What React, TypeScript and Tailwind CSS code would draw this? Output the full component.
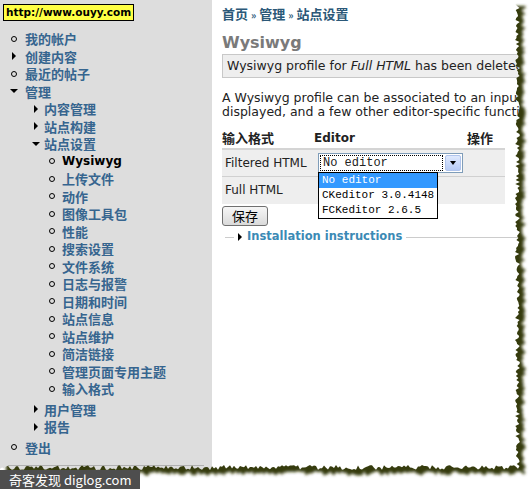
import React from 'react'

type Marker = 'circle' | 'right' | 'down'

interface MenuItem {
  label: string
  level: 0 | 1 | 2
  marker: Marker
  active?: boolean
  gap?: boolean
}

const menu: MenuItem[] = [
  { label: '我的帐户', level: 0, marker: 'circle' },
  { label: '创建内容', level: 0, marker: 'right' },
  { label: '最近的帖子', level: 0, marker: 'circle' },
  { label: '管理', level: 0, marker: 'down' },
  { label: '内容管理', level: 1, marker: 'right' },
  { label: '站点构建', level: 1, marker: 'right' },
  { label: '站点设置', level: 1, marker: 'down' },
  { label: 'Wysiwyg', level: 2, marker: 'circle', active: true },
  { label: '上传文件', level: 2, marker: 'circle' },
  { label: '动作', level: 2, marker: 'circle' },
  { label: '图像工具包', level: 2, marker: 'circle' },
  { label: '性能', level: 2, marker: 'circle' },
  { label: '搜索设置', level: 2, marker: 'circle' },
  { label: '文件系统', level: 2, marker: 'circle' },
  { label: '日志与报警', level: 2, marker: 'circle' },
  { label: '日期和时间', level: 2, marker: 'circle' },
  { label: '站点信息', level: 2, marker: 'circle' },
  { label: '站点维护', level: 2, marker: 'circle' },
  { label: '简洁链接', level: 2, marker: 'circle' },
  { label: '管理页面专用主题', level: 2, marker: 'circle' },
  { label: '输入格式', level: 2, marker: 'circle' },
  { label: '用户管理', level: 1, marker: 'right', gap: true },
  { label: '报告', level: 1, marker: 'right' },
  { label: '登出', level: 0, marker: 'circle', gap: true },
]

const cjk = "font-['Noto_Sans_CJK_SC',sans-serif]"
const latin = "font-['DejaVu_Sans','Noto_Sans_CJK_SC',sans-serif]"

const MarkerIcon = ({ type }: { type: Marker }) => {
  if (type === 'circle')
    return <span className="block h-[6px] w-[6px] rounded-full border border-black" />
  if (type === 'right')
    return <span className="block h-0 w-0 border-y-[4px] border-l-[4px] border-y-transparent border-l-black" />
  return <span className="block h-0 w-0 border-x-[4px] border-t-[4px] border-x-transparent border-t-black" />
}

// jagged torn paper edge, drawn once
function tornEdge() {
  let s = 17
  const r = () => {
    s = (s * 9301 + 49297) % 233280
    return s / 233280
  }
  const pts: string[] = []
  for (let y = 0; y <= 466; y += 2) pts.push(`${(515 + r() * 5).toFixed(1)},${y}`)
  for (let x = 518; x >= 0; x -= 2) pts.push(`${x},${(465 + r() * 5).toFixed(1)}`)
  return `M0,0 L${pts.join(' L')} Z`
}
const paper = tornEdge()

const TornOverlay = () => (
  <svg className="pointer-events-none absolute inset-0" width="532" height="489">
    <defs>
      <clipPath id="outside">
        <path clipRule="evenodd" d={`M0,0 H532 V489 H0 Z ${paper}`} />
      </clipPath>
      <filter id="soft" x="-5%" y="-5%" width="110%" height="110%">
        <feGaussianBlur stdDeviation="1.5" />
      </filter>
    </defs>
    <path fillRule="evenodd" fill="#ffffff" d={`M0,0 H532 V489 H0 Z ${paper}`} />
    <g clipPath="url(#outside)">
      <path d={paper} transform="translate(6,6)" fill="#363a0c" filter="url(#soft)" />
    </g>
  </svg>
)

export default function App() {
  return (
    <div className="relative h-[489px] w-[532px] overflow-hidden bg-white">
      <div className="flex h-full">
        {/* sidebar */}
        <div className="flex w-[212px] shrink-0 flex-col bg-[#dddddd]">
          <div className="ml-[3px] mt-[4px] w-fit border border-black bg-[#ffff44] px-[2px] text-[10.5px] font-bold leading-[15px] text-black font-['DejaVu_Sans',sans-serif]">
            http://www.ouyy.com
          </div>
          <ul className="mt-[9px]">
            {menu.map((m) => (
              <li
                key={m.label}
                className={`flex h-[17.5px] items-center ${
                  m.level === 0 ? 'pl-[10px]' : m.level === 1 ? 'pl-[32px]' : 'pl-[48px]'
                } ${m.gap ? 'mt-[3px]' : ''}`}
              >
                <span
                  className={`flex w-[8px] justify-center ${
                    m.level === 0 ? 'mr-[7px]' : m.level === 1 ? 'mr-[4px]' : 'mr-[6px]'
                  }`}
                >
                  <MarkerIcon type={m.marker} />
                </span>
                <span
                  className={
                    m.active
                      ? `text-[12px] font-bold text-black ${latin}`
                      : `text-[13px] font-bold text-[#36658f] ${cjk}`
                  }
                >
                  {m.label}
                </span>
              </li>
            ))}
          </ul>
          <div className="mx-[8px] mb-[23px] mt-auto h-px bg-[#b0b0b0]" />
        </div>

        {/* main */}
        <div className={`min-w-0 flex-1 overflow-hidden pl-[10px] ${latin}`}>
          <div className={`mt-[5px] text-[13px] font-bold leading-[18px] text-[#2b5878] ${cjk}`}>
            首页 <span className="text-[10px]">»</span> 管理 <span className="text-[10px]">»</span> 站点设置
          </div>
          <h1 className="mt-[9px] text-[16px] font-bold leading-[20px] text-[#7a7a7a]">Wysiwyg</h1>
          <div className="mt-[1px] h-[24px] w-[340px] whitespace-nowrap border border-[#c8c8c8] bg-[#eeeeee] pl-[4px] text-[12.5px] leading-[22px] text-[#222]">
            Wysiwyg profile for <em>Full HTML</em> has been deleted.
          </div>
          <p className="mt-[13px] w-[420px] text-[12.5px] leading-[14px] text-[#222]">
            A Wysiwyg profile can be associated to an input format.
            <br />
            displayed, and a few other editor-specific functions.
          </p>

          <table className="mt-[8px] w-[283px] border-collapse text-[12px] text-[#222]">
            <thead>
              <tr className="h-[22px] border-b-2 border-[#d4d4d4] text-left align-middle">
                <th className={`w-[92px] text-[13px] font-bold ${cjk}`}>输入格式</th>
                <th className="w-[153px] text-[12px] font-bold">Editor</th>
                <th className={`text-[13px] font-bold ${cjk}`}>操作</th>
              </tr>
            </thead>
            <tbody>
              <tr className="h-[27px] border-b border-[#d0d0d0] bg-[#eeeeee]">
                <td className="pl-[3px]">Filtered HTML</td>
                <td className="pl-[4px]">
                  <div className="flex h-[20px] w-[145px] items-stretch border border-[#7f9db9] bg-white">
                    <div className="m-[1px] flex flex-1 items-center border border-dotted border-black pl-[2px] text-[12px] font-['Liberation_Mono',monospace]">
                      No editor
                    </div>
                    <div className="m-[1px] flex w-[16px] items-center justify-center rounded-[2px] border border-[#b0c4ec] bg-gradient-to-b from-[#dfe9fd] to-[#b7cbf5]">
                      <span className="block h-0 w-0 border-x-[3.5px] border-t-[4px] border-x-transparent border-t-black" />
                    </div>
                  </div>
                </td>
                <td />
              </tr>
              <tr className="h-[28px] bg-[#eeeeee]">
                <td className="pl-[3px]">Full HTML</td>
                <td />
                <td />
              </tr>
            </tbody>
          </table>

          <button className={`mt-[2px] h-[20px] w-[46px] rounded-[3px] border border-[#707070] bg-gradient-to-b from-[#f6f6f6] to-[#dadada] text-[13px] leading-[16px] text-black ${cjk}`}>
            保存
          </button>

          <div className="mt-[1px] flex h-[16px] items-center pl-[3px]">
            <div className="h-px w-[9px] bg-[#cccccc]" />
            <div className="flex items-center px-[4px]">
              <span className="mr-[5px] block h-0 w-0 border-y-[4px] border-l-[4px] border-y-transparent border-l-black" />
              <span className="text-[11.5px] font-bold text-[#3b8ab5]">Installation instructions</span>
            </div>
            <div className="h-px flex-1 bg-[#cccccc]" />
          </div>
        </div>
      </div>

      {/* open select list */}
      <ul className="absolute left-[318px] top-[172px] w-[120px] border border-black bg-white text-[11px] leading-[15px] text-black font-['Liberation_Mono',monospace]">
        <li className="bg-[#3399ff] pl-[3px] text-white">No editor</li>
        <li className="pl-[3px]">CKeditor 3.0.4148</li>
        <li className="pl-[3px]">FCKeditor 2.6.5</li>
      </ul>

      <TornOverlay />

      <div className={`absolute bottom-0 left-0 flex h-[19px] w-[140px] items-center bg-[#4e4e4e] pl-[9px] text-[13px] text-white ${cjk}`}>
        奇客发现 diglog.com
      </div>
    </div>
  )
}
